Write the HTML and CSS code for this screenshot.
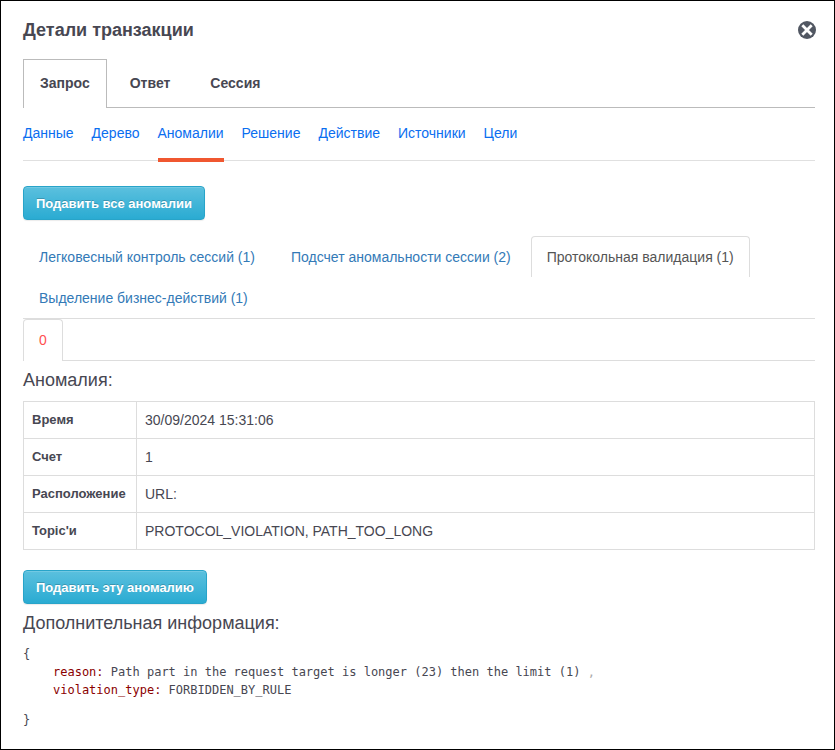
FILE: index.html
```html
<!DOCTYPE html>
<html lang="ru">
<head>
	<meta charset="UTF-8">
	<title>Детали транзакции</title>
	<link rel="stylesheet" href="styles.css">
</head>
<body>
	<div class="dialog">
		<header class="header">
			<h1>Детали транзакции</h1>
			<button type="button" class="close" aria-label="Закрыть">
				<svg width="18" height="18" viewBox="0 0 18 18">
					<circle cx="9" cy="9" r="9" fill="#515762"/>
					<path d="M5.3 5.3L12.7 12.7M12.7 5.3L5.3 12.7" stroke="#fff" stroke-width="2.8" stroke-linecap="square"/>
				</svg>
			</button>
		</header>

		<nav class="mainTabs">
			<a href="#request" class="active">Запрос</a>
			<a href="#response">Ответ</a>
			<a href="#session">Сессия</a>
		</nav>

		<nav class="subTabs">
			<a href="#data">Данные</a>
			<a href="#tree">Дерево</a>
			<a href="#anomalies" class="active">Аномалии</a>
			<a href="#decision">Решение</a>
			<a href="#action">Действие</a>
			<a href="#sources">Источники</a>
			<a href="#targets">Цели</a>
		</nav>

		<button type="button" class="btn">Подавить все аномалии</button>

		<!-- anomaly groups -->
		<nav class="pills groups">
			<a href="#light">Легковесный контроль сессий (1)</a>
			<a href="#count">Подсчет аномальности сессии (2)</a>
			<a href="#protocol" class="active">Протокольная валидация (1)</a>
			<a href="#business">Выделение бизнес-действий (1)</a>
		</nav>
		<nav class="pills">
			<a href="#anomaly0" class="active danger">0</a>
		</nav>

		<h2>Аномалия:</h2>
		<table class="details">
			<tr>
				<th scope="row">Время</th>
				<td>30/09/2024 15:31:06</td>
			</tr>
			<tr>
				<th scope="row">Счет</th>
				<td>1</td>
			</tr>
			<tr>
				<th scope="row">Расположение</th>
				<td>URL:</td>
			</tr>
			<tr>
				<th scope="row">Topic'и</th>
				<td>PROTOCOL_VIOLATION, PATH_TOO_LONG</td>
			</tr>
		</table>

		<button type="button" class="btn">Подавить эту аномалию</button>

		<h2>Дополнительная информация:</h2>
		<div class="json">
			<div>{</div>
			<ul>
				<li><span class="key">reason:</span> Path part in the request target is longer (23) then the limit (1) <span class="comma">,</span></li>
				<li><span class="key">violation_type:</span> FORBIDDEN_BY_RULE</li>
			</ul>
			<div>}</div>
		</div>
	</div>
</body>
</html>
```

FILE: styles.css
```css
*{
	box-sizing: border-box;
}
body{
	margin: 0;
	font-family: "Liberation Sans", Arial, sans-serif;
	font-size: 14px;
	line-height: 20px;
	color: #474752;
	background-color: #fff;
}
a{
	text-decoration: none;
}
.dialog{
	min-height: 100vh;
	padding: 17px 19px 17px 22px;
	border: 1px solid #000;
}
.header{
	display: flex;
	justify-content: space-between;
	align-items: center;
	height: 24px;
	margin-right: -1px;
	margin-bottom: 17px;
}
h1{
	margin: 0;
	font-size: 18px;
	line-height: 24px;
}
.close{
	width: 18px;
	height: 18px;
	padding: 0;
	border: 0;
	background: none;
	cursor: pointer;
}
.close svg{
	display: block;
}
.mainTabs{
	display: flex;
	gap: 6px;
	border-bottom: 1px solid #bbb;
}
.mainTabs a{
	padding: 13px 16px 15px;
	margin-bottom: -1px;
	border: 1px solid transparent;
	border-bottom: 0;
	color: #474752;
	font-weight: bold;
}
.mainTabs .active{
	border-color: #bbb;
	background-color: #fff;
}
.subTabs{
	display: flex;
	gap: 18px;
	margin-bottom: 25px;
	border-bottom: 1px solid #e0e0e0;
}
.subTabs a{
	padding: 15px 0;
	margin-bottom: -2px;
	border-bottom: 4px solid transparent;
	color: #0a6ef0;
}
.subTabs .active{
	border-color: #f05730;
}
.btn{
	display: block;
	height: 34px;
	padding: 0 12px;
	border: 1px solid #28a4c9;
	border-radius: 4px;
	background-image: linear-gradient(#5bc0de, #2aabd2);
	box-shadow: inset 0 1px 0 rgba(255, 255, 255, 0.15), 0 1px 1px rgba(0, 0, 0, 0.08);
	color: #fff;
	font: bold 13px "Liberation Sans", Arial, sans-serif;
	text-shadow: 0 -1px 0 rgba(0, 0, 0, 0.2);
	cursor: pointer;
}
.pills{
	display: flex;
	flex-wrap: wrap;
	column-gap: 4px;
	border-bottom: 1px solid #ddd;
}
.groups{
	margin-top: 16px;
}
.pills a{
	padding: 10px 15px;
	border: 1px solid transparent;
	border-bottom: 0;
	border-radius: 4px 4px 0 0;
	color: #337ab7;
}
.pills .active{
	border-color: #ddd;
	color: #555;
}
.pills .danger{
	margin-bottom: -1px;
	padding-bottom: 11px;
	background-color: #fff;
	color: #ff5050;
}
h2{
	margin: 9px 0 11px;
	font-size: 18px;
	line-height: 20px;
	font-weight: normal;
}
.details{
	width: 100%;
	margin-bottom: 20px;
	border-collapse: collapse;
}
.details th, .details td{
	padding: 8px;
	border: 1px solid #ddd;
	text-align: left;
}
.details th{
	width: 113px;
	font-size: 13px;
}
.json{
	margin-top: 12px;
	font-family: "DejaVu Sans Mono", monospace;
	font-size: 12px;
	line-height: 18px;
}
.json ul{
	margin: 0 0 12px;
	padding-left: 30px;
	list-style: none;
}
.json .key{
	color: #8b0000;
}
.json .comma{
	color: #aaa;
}
```
